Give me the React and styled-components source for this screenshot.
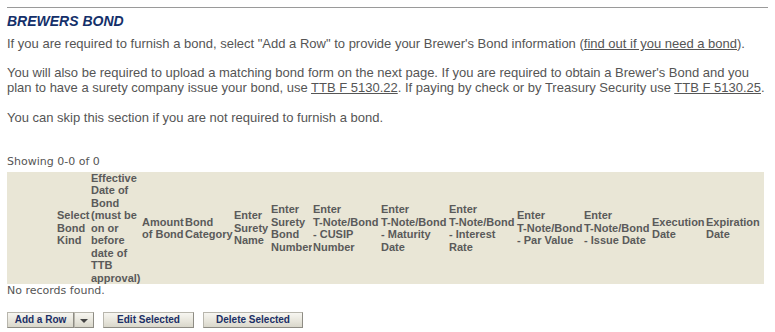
import React from "react";
import styled, { createGlobalStyle } from "styled-components";

const Global = createGlobalStyle`
  html, body { margin: 0; padding: 0; background: #fff; }
  body { font-family: "Liberation Sans", Arial, sans-serif; }
`;

const Page = styled.div`
  padding: 7px 0 0 7px;
  width: 768px;
  box-sizing: border-box;
`;

const Rule = styled.hr`
  margin: 0;
  border: 0;
  border-top: 1px solid #9a9a9a;
  width: 100%;
`;

const Title = styled.h2`
  margin: 5px 0 0;
  font: italic bold 14px/16px "Liberation Sans", Arial, sans-serif;
  color: #14306a;
`;

const Para = styled.p`
  margin: ${(p) => p.$top}px 0 0;
  font-size: 13px;
  line-height: 15px;
  color: #555;
  white-space: nowrap;
`;

const Link = styled.a`
  color: #555;
  text-decoration: underline;
`;

const Meta = styled.div`
  margin-top: ${(p) => p.$top}px;
  font: 11px/12.8px "DejaVu Sans", Verdana, sans-serif;
  color: #555;
`;

const Table = styled.table`
  margin-top: 3px;
  border-collapse: collapse;
  table-layout: fixed;
  width: 757px;
  background: #e9e6d6;
`;

const Th = styled.th`
  padding: 0 0 0 1px;
  text-align: left;
  vertical-align: middle;
  font: bold 11px/12.5px "Liberation Sans", Arial, sans-serif;
  color: #5a5a5a;
  white-space: nowrap;
  overflow: hidden;
`;

const Toolbar = styled.div`
  display: flex;
  gap: 9px;
  margin-top: 14px;
  align-items: stretch;
`;

const Split = styled.div`
  display: flex;
`;

const Button = styled.button`
  box-sizing: border-box;
  height: 16px;
  width: ${(p) => p.$w}px;
  padding: 0;
  margin: 0;
  border: 1px solid #b8b6ad;
  border-right-color: #8e8c84;
  border-bottom-color: #8e8c84;
  background: linear-gradient(#f7f6f1, #e6e4da 60%, #d9d7cb);
  font: bold 10px/14px "Liberation Sans", Arial, sans-serif;
  color: #1b2f66;
  display: flex;
  align-items: center;
  justify-content: center;
  cursor: pointer;
`;

const Arrow = styled.span`
  width: 0;
  height: 0;
  border-left: 4px solid transparent;
  border-right: 4px solid transparent;
  border-top: 4px solid #444;
  margin-top: 1px;
`;

const cols = [
  { w: 49, lines: [] },
  { w: 34, lines: ["Select", "Bond", "Kind"] },
  { w: 51, lines: ["Effective", "Date of", "Bond", "(must be", "on or", "before", "date of", "TTB", "approval)"] },
  { w: 43, lines: ["Amount", "of Bond"] },
  { w: 49, lines: ["Bond", "Category"] },
  { w: 37, lines: ["Enter", "Surety", "Name"] },
  { w: 42, lines: ["Enter", "Surety", "Bond", "Number"] },
  { w: 68, lines: ["Enter", "T-Note/Bond", "- CUSIP", "Number"] },
  { w: 68, lines: ["Enter", "T-Note/Bond", "- Maturity", "Date"] },
  { w: 68, lines: ["Enter", "T-Note/Bond", "- Interest", "Rate"] },
  { w: 67, lines: ["Enter", "T-Note/Bond", "- Par Value"] },
  { w: 68, lines: ["Enter", "T-Note/Bond", "- Issue Date"] },
  { w: 54, lines: ["Execution", "Date"] },
  { w: 59, lines: ["Expiration", "Date"] },
];

export default function App() {
  return (
    <>
      <Global />
      <Page>
        <Rule />
        <Title>BREWERS BOND</Title>
        <Para $top={7}>
          If you are required to furnish a bond, select "Add a Row" to provide your Brewer's Bond information (
          <Link href="#">find out if you need a bond</Link>).
        </Para>
        <Para $top={14}>
          You will also be required to upload a matching bond form on the next page. If you are required to obtain a Brewer's Bond and you
          <br />
          plan to have a surety company issue your bond, use <Link href="#">TTB F 5130.22</Link>. If paying by check or by Treasury Security use{" "}
          <Link href="#">TTB F 5130.25</Link>.
        </Para>
        <Para $top={15}>You can skip this section if you are not required to furnish a bond.</Para>
        <Meta $top={31}>Showing 0-0 of 0</Meta>
        <Table>
          <colgroup>
            {cols.map((c, i) => (
              <col key={i} style={{ width: c.w }} />
            ))}
          </colgroup>
          <thead>
            <tr>
              {cols.map((c, i) => (
                <Th key={i}>
                  {c.lines.map((l, j) => (
                    <React.Fragment key={j}>
                      {j > 0 && <br />}
                      {l}
                    </React.Fragment>
                  ))}
                </Th>
              ))}
            </tr>
          </thead>
        </Table>
        <Meta $top={1}>No records found.</Meta>
        <Toolbar>
          <Split>
            <Button $w={67}>Add a Row</Button>
            <Button $w={20} aria-label="More">
              <Arrow />
            </Button>
          </Split>
          <Button $w={91}>Edit Selected</Button>
          <Button $w={100}>Delete Selected</Button>
        </Toolbar>
      </Page>
    </>
  );
}
